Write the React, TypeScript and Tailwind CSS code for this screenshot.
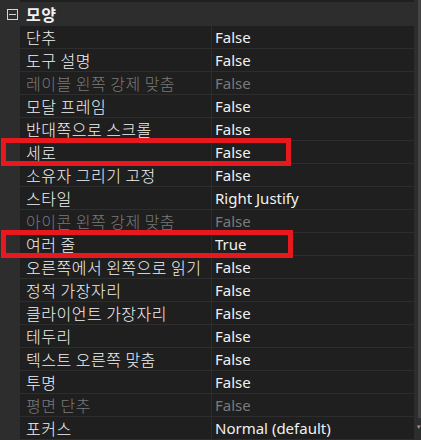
import React from "react";

type Prop = { name: string; value: string; disabled?: boolean };

// 속성 목록
const props: Prop[] = [
  { name: "단추", value: "False" },
  { name: "도구 설명", value: "False" },
  { name: "레이블 왼쪽 강제 맞춤", value: "False", disabled: true },
  { name: "모달 프레임", value: "False" },
  { name: "반대쪽으로 스크롤", value: "False" },
  { name: "세로", value: "False" },
  { name: "소유자 그리기 고정", value: "False" },
  { name: "스타일", value: "Right Justify" },
  { name: "아이콘 왼쪽 강제 맞춤", value: "False", disabled: true },
  { name: "여러 줄", value: "True" },
  { name: "오른쪽에서 왼쪽으로 읽기", value: "False" },
  { name: "정적 가장자리", value: "False" },
  { name: "클라이언트 가장자리", value: "False" },
  { name: "테두리", value: "False" },
  { name: "텍스트 오른쪽 맞춤", value: "False" },
  { name: "투명", value: "False" },
  { name: "평면 단추", value: "False", disabled: true },
  { name: "포커스", value: "Normal (default)" },
];

const font = "font-['Malgun_Gothic','Noto_Sans_CJK_KR','Noto_Sans',sans-serif]";

export default function App() {
  return (
    <div className={`relative flex h-[440px] w-[421px] overflow-hidden bg-[#2d2d2d] text-[15px] ${font}`}>
      {/* 속성 그리드 */}
      <div className="flex w-[414px] flex-col">
        <div className="flex h-[2px] shrink-0">
          <div className="w-[20px]" />
          <div className="flex-1 bg-[#1f1f1f]" />
        </div>

        {/* 카테고리 헤더 */}
        <div className="flex h-[24px] shrink-0 items-center">
          <div className="ml-[7px] flex h-[11px] w-[11px] items-center justify-center border border-[#d4d4d4]">
            <div className="h-px w-[7px] bg-[#d4d4d4]" />
          </div>
          <span className="ml-[8px] text-[16px] font-bold leading-none tracking-[0.5px] text-[#f1f1f1]">모양</span>
        </div>

        {props.map((p) => (
          <div key={p.name} className="flex h-[23px] shrink-0 border-b border-[#2d2d2d]">
            <div className="w-[20px] shrink-0" />
            <div
              className={`flex w-[191px] shrink-0 items-center overflow-hidden whitespace-nowrap bg-[#1f1f1f] pl-[6px] text-[16px] font-light leading-none tracking-[0.5px] ${
                p.disabled ? "text-[#7a7a7a]" : "text-[#f1f1f1]"
              }`}
            >
              {p.name}
            </div>
            <div className="w-px shrink-0 bg-[#2d2d2d]" />
            <div
              className={`flex flex-1 items-center bg-[#1f1f1f] pl-[3px] font-['Noto_Sans',sans-serif] leading-none ${
                p.disabled ? "text-[#7a7a7a]" : "text-[#f1f1f1]"
              }`}
            >
              {p.value}
            </div>
          </div>
        ))}
      </div>

      {/* 스크롤바 */}
      <div className="relative flex w-[7px] bg-[#2d2d2d]">
        <div className="ml-[4px] h-[418px] w-[3px] bg-[#444444]" />
        <span className="absolute left-[3px] top-[423px] text-[7px] leading-none text-[#9a9a9a]">▾</span>
      </div>

      {/* 강조 박스 */}
      <div className="pointer-events-none absolute left-[1px] top-[138px] h-[28px] w-[290px] border-[5px] border-[#e8181f]" />
      <div className="pointer-events-none absolute left-[1px] top-[230px] h-[28px] w-[292px] border-[5px] border-[#e8181f]" />
    </div>
  );
}
